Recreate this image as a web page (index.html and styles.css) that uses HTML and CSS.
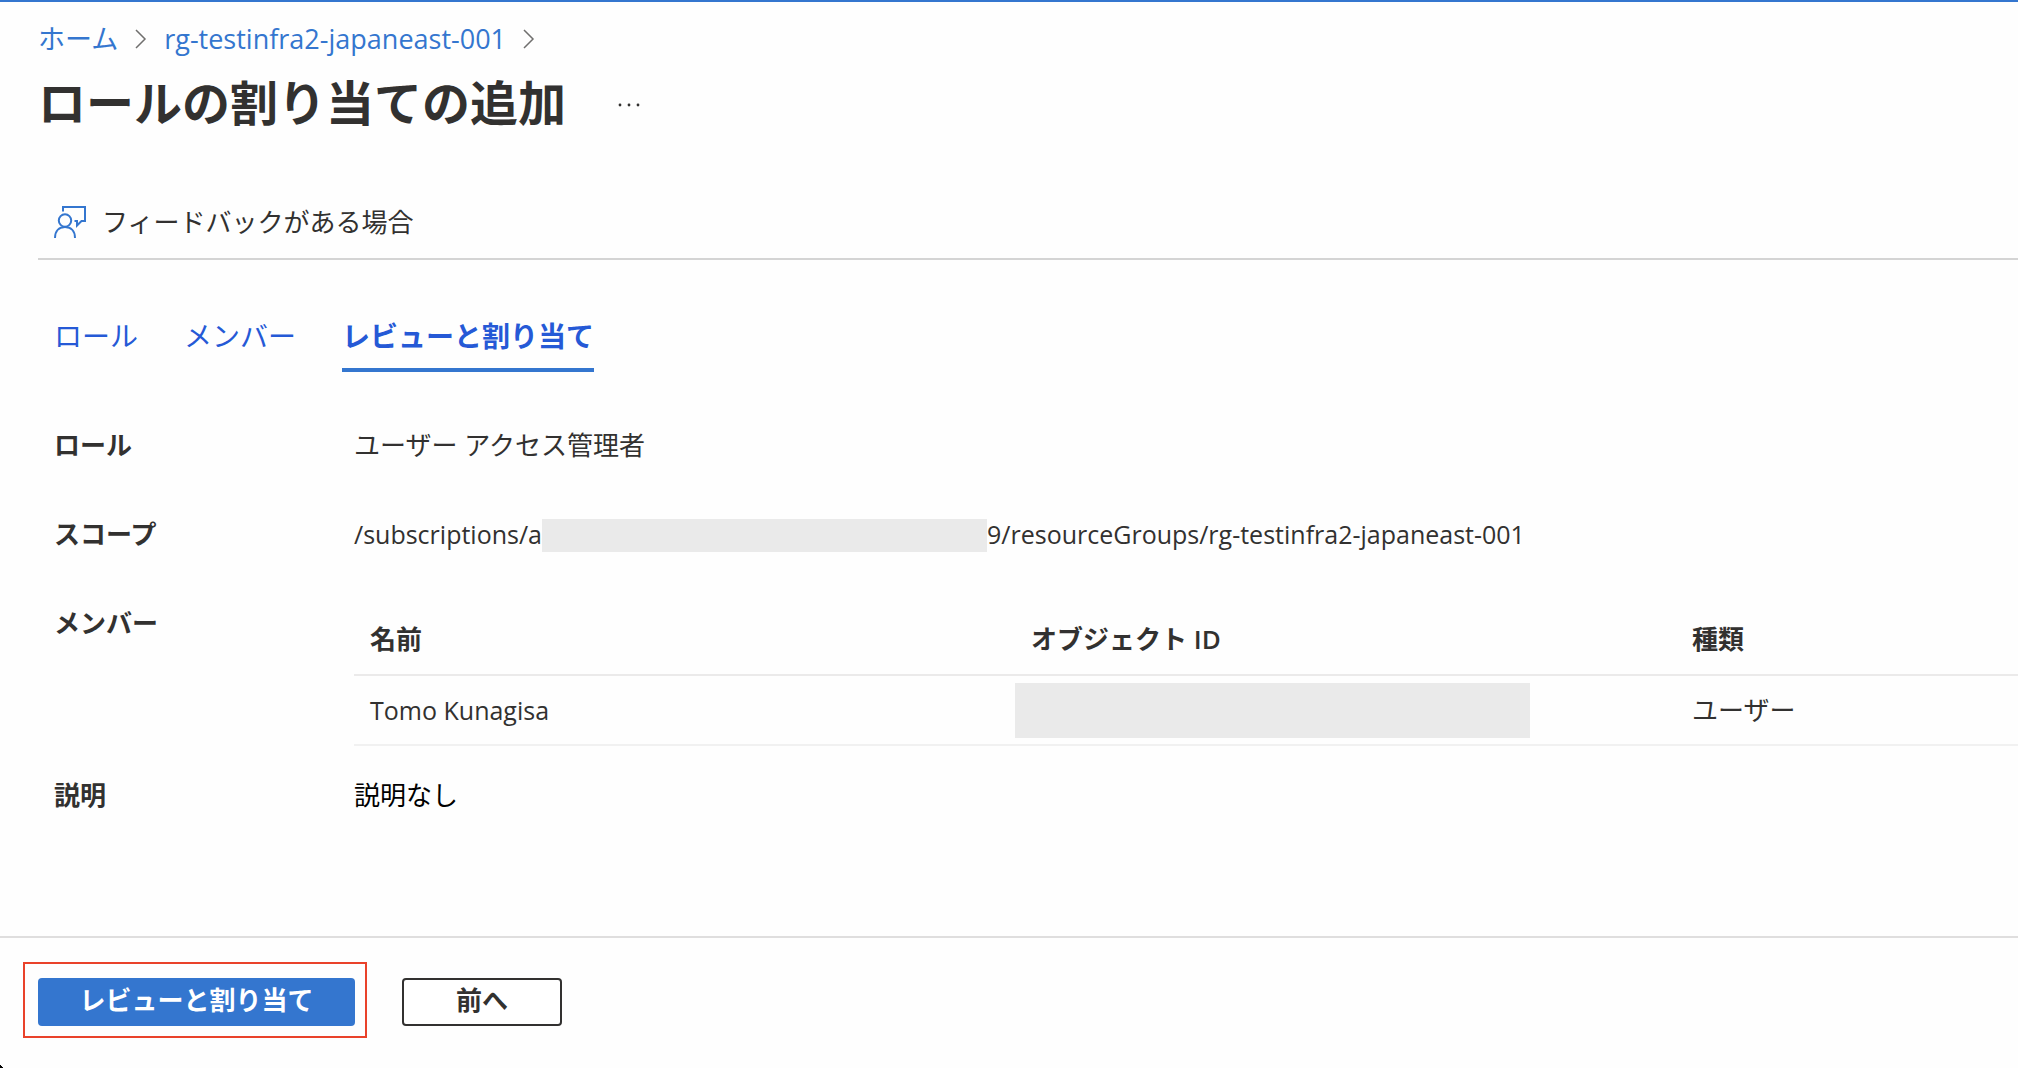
FILE: index.html
```html
<!DOCTYPE html>
<html lang="ja">
<head>
<meta charset="utf-8">
<meta name="viewport" content="width=device-width, initial-scale=1">
<title>ロールの割り当ての追加</title>
<link rel="stylesheet" href="styles.css">
</head>
<body class="page">
<header class="header">
  <nav class="breadcrumb">
    <a class="crumb" href="#">ホーム</a>
    <svg class="chevron" viewBox="0 0 12 20"><path d="M1 1 L10 10 L1 19"/></svg>
    <a class="crumb" href="#">rg-testinfra2-japaneast-001</a>
    <svg class="chevron" viewBox="0 0 12 20"><path d="M1 1 L10 10 L1 19"/></svg>
  </nav>
  <div class="title-row">
    <h1 class="title">ロールの割り当ての追加</h1>
    <button class="more" type="button" aria-label="その他">
      <svg class="more-dots" viewBox="0 0 24 4"><circle cx="3" cy="2" r="1.4"/><circle cx="12" cy="2" r="1.4"/><circle cx="21" cy="2" r="1.4"/></svg>
    </button>
  </div>
</header>
<div class="toolbar">
  <button class="feedback" type="button">
    <svg class="feedback-icon" viewBox="0 0 32 32"><path d="M9 5.5V1H31V15H27.5L23 19.5V15H20.5"/><circle cx="11" cy="14.500" r="6.2"/><path d="M1 32C1 25 5 21 11 21S21 25 21 32"/></svg>
    <span>フィードバックがある場合</span>
  </button>
</div>
<main class="main">
  <nav class="tabs">
    <a class="tab" href="#">ロール</a>
    <a class="tab" href="#">メンバー</a>
    <a class="tab tab-active" href="#" aria-current="page">レビューと割り当て</a>
  </nav>
  <dl class="details">
    <dt class="label">ロール</dt>
    <dd class="value">ユーザー アクセス管理者</dd>
    <dt class="label">スコープ</dt>
    <dd class="value scope"><span class="scope-start">/subscriptions/a4</span><span class="mask"></span><span>9/resourceGroups/rg-testinfra2-japaneast-001</span></dd>
    <dt class="label">メンバー</dt>
    <dd class="value members">
      <table class="table">
        <thead>
          <tr><th class="col-wide">名前</th><th class="col-wide">オブジェクト ID</th><th>種類</th></tr>
        </thead>
        <tbody>
          <tr><td class="cell-name">Tomo Kunagisa</td><td class="cell-masked"><div class="mask-block"></div></td><td>ユーザー</td></tr>
        </tbody>
      </table>
    </dd>
    <dt class="label">説明</dt>
    <dd class="value value-dark">説明なし</dd>
  </dl>
</main>
<footer class="footer">
  <div class="highlight"><button class="button button-primary" type="button">レビューと割り当て</button></div>
  <button class="button button-secondary" type="button">前へ</button>
  <span class="corner"></span>
</footer>
</body>
</html>
```
FILE: styles.css
```css
* { box-sizing: border-box; }

.page {
  margin: 0;
  min-height: 100vh;
  display: flex;
  flex-direction: column;
  position: relative;
  border-top: 2px solid #3476cf;
  background: #fefefe;
  color: #323130;
  font-family: "Open Sans", "Noto Sans CJK JP", sans-serif;
  font-size: 26px;
  line-height: 36px;
}

a { text-decoration: none; }

button {
  font: inherit;
  color: inherit;
  cursor: pointer;
}

.header { padding: 19px 38px 0; }

.breadcrumb {
  display: flex;
  align-items: center;
  gap: 17px;
  font-size: 27px;
}

.crumb { color: #3476cf; }

.chevron {
  width: 12px;
  height: 20px;
  fill: none;
  stroke: #706f6e;
  stroke-width: 1.5;
}

.title-row {
  display: flex;
  align-items: center;
  gap: 51px;
  margin-top: 10px;
}

.title {
  margin: 0;
  font-size: 48px;
  line-height: 72px;
  font-weight: 700;
}

.more {
  display: flex;
  padding: 4px 0 0;
  border: 0;
  background: none;
}

.more-dots {
  width: 24px;
  height: 4px;
  fill: #323130;
}

.toolbar {
  margin-left: 38px;
  margin-top: 61px;
  padding: 4px 16px 18px;
  border-bottom: 2px solid #d4d4d4;
}

.feedback {
  display: flex;
  align-items: center;
  gap: 16px;
  padding: 0;
  border: 0;
  background: none;
}

.feedback-icon {
  width: 32px;
  height: 32px;
  fill: none;
  stroke: #3476cf;
  stroke-width: 2;
}

.main {
  flex: 1;
  padding: 56px 0 0 54px;
}

.tabs {
  display: flex;
  gap: 46px;
  font-size: 28px;
}

.tab {
  padding-bottom: 12px;
  border-bottom: 4px solid transparent;
  line-height: 40px;
  color: #2559d6;
}

.tab-active {
  border-color: #3476cf;
  font-weight: 700;
}

.details {
  display: grid;
  grid-template-columns: 300px 1fr;
  margin: 55px 0 0;
}

.label { font-weight: 700; }

.value {
  margin: 0;
  padding-bottom: 53px;
}

.value-dark { color: #000000; }

.scope {
  display: flex;
  align-items: flex-end;
  font-size: 25px;
}

.scope-start {
  width: 188px;
  white-space: nowrap;
}

/* covers the end of the text before it */
.mask {
  position: relative;
  width: 445px;
  height: 33px;
  background: #eaeaea;
}

.members { padding-bottom: 31px; }

.table {
  width: 100%;
  table-layout: fixed;
  border-collapse: collapse;
}

.table th {
  padding: 16px 16px 17px;
  border-bottom: 2px solid #ebeaea;
  text-align: left;
  font-weight: 600;
}

.col-wide { width: 661px; }

.table td {
  height: 70px;
  padding: 0 16px;
  border-bottom: 2px solid #f1f1f1;
}

.table .cell-name { font-size: 25px; }

.table .cell-masked { padding: 0; }

.mask-block {
  width: 515px;
  height: 55px;
  background: #eaeaea;
}

.footer {
  display: flex;
  align-items: center;
  gap: 35px;
  padding: 24px 23px 30px;
  border-top: 2px solid #dfdede;
}

.highlight {
  padding: 14px 10px 10px 13px;
  border: 2px solid #e9422a;
}

.button {
  display: block;
  height: 48px;
  padding: 0 0 4px;
  border-radius: 4px;
  font-weight: 700;
}

.button-primary {
  width: 317px;
  border: 0;
  background: #3476cf;
  color: #ffffff;
}

.button-secondary {
  width: 160px;
  margin-top: 4px;
  border: 2px solid #323130;
  background: #ffffff;
}

/* rounded window corner */
.corner {
  position: absolute;
  left: 0;
  bottom: 0;
  width: 3px;
  height: 4px;
  background: linear-gradient(to top right, #000000 50%, transparent 50%);
}
```
